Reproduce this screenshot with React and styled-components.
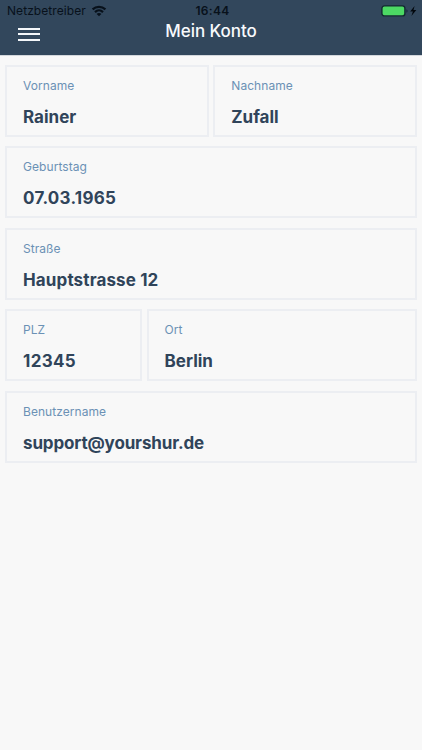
import React from 'react';
import styled, { createGlobalStyle } from 'styled-components';

const GlobalStyle = createGlobalStyle`
  * { box-sizing: border-box; }
  body { margin: 0; background: #f8f8f8; font-family: Inter, "Liberation Sans", sans-serif; }
`;

const Screen = styled.div`
  min-height: 750px;
  background: #f8f8f8;
`;

const Header = styled.header`
  height: 55px;
  background: #32475c;
  box-shadow: 0 1px 0 #d3d7dc;
`;

const StatusBar = styled.div`
  display: grid;
  grid-template-columns: 1fr auto 1fr;
  align-items: center;
  height: 22px;
  padding: 0 5px 0 7px;
  font-size: 12px;
  line-height: 22px;
  color: #08111b;
`;

const Carrier = styled.div`
  display: flex;
  align-items: center;
  gap: 5px;
  letter-spacing: 0.07px;
`;

const Clock = styled.div`
  padding-left: 1px;
  font-weight: 600;
  letter-spacing: 0.3px;
`;

const Power = styled.div`
  display: flex;
  align-items: center;
  justify-content: flex-end;
`;

const NavBar = styled.div`
  display: grid;
  grid-template-columns: 22px 1fr 22px;
  padding: 0 18px;
  height: 33px;
`;

const MenuButton = styled.button`
  display: flex;
  flex-direction: column;
  gap: 3.6px;
  width: 22px;
  height: 14px;
  margin: 6px 0 0;
  padding: 0;
  border: 0;
  background: none;
`;

const MenuLine = styled.span`
  height: 1.9px;
  flex: none;
  background: #f4f7fa;
`;

const Title = styled.h1`
  margin: 0;
  font-size: 17px;
  line-height: 18px;
  font-weight: 500;
  letter-spacing: -0.06px;
  text-align: center;
  color: #f8fafc;
`;

const Fields = styled.dl`
  display: flex;
  flex-direction: column;
  gap: 9.4px;
  margin: 0;
  padding: 10px 5px;
`;

const Row = styled.div`
  display: grid;
  grid-template-columns: ${({ $columns }) => $columns || '1fr'};
  gap: 4.6px;
`;

const Card = styled.div`
  height: 72px;
  padding: 11px 16px 0;
  border: 2px solid #eceef2;
`;

const Label = styled.dt`
  font-size: 12px;
  line-height: 16px;
  letter-spacing: 0.06px;
  color: #6b91b5;
`;

const Value = styled.dd`
  margin: 12px 0 0;
  font-size: 17px;
  line-height: 22px;
  font-weight: 650;
  letter-spacing: ${({ $tracking }) => $tracking ?? 0}px;
  color: #30445a;
`;

const WifiIcon = () => (
  <svg width="16" height="12" viewBox="0 0 16 12" fill="none" stroke="#08111b" strokeWidth="2.2">
    <path d="M1.6 4.4C5.2.9 10.8.9 14.4 4.4" />
    <path d="M4 7.1c2.3-2.2 5.7-2.2 8 0" />
    <path d="M8 11.2 5.6 8.9c1.3-1.2 3.5-1.2 4.8 0Z" fill="#08111b" stroke="none" />
  </svg>
);

const BatteryIcon = () => (
  <svg width="36" height="12" viewBox="0 0 36 12">
    <rect x="0.9" y="0.9" width="23" height="10" rx="2.5" fill="#4cd964" stroke="#132a31" strokeWidth="1.4" />
    <path d="M25.4 4.3c1.6.5 1.6 2.9 0 3.4Z" fill="#16283a" />
    <path d="m33.6 0.9-4.4 5.5h2.7l-1.5 4.7 4.9-6h-2.8Z" fill="#02070c" />
  </svg>
);

const rows = [
  {
    columns: '1fr 1fr',
    fields: [
      { label: 'Vorname', value: 'Rainer', tracking: 0 },
      { label: 'Nachname', value: 'Zufall', tracking: 0 },
    ],
  },
  { fields: [{ label: 'Geburtstag', value: '07.03.1965', tracking: 0.26 }] },
  { fields: [{ label: 'Straße', value: 'Hauptstrasse 12', tracking: 0.13 }] },
  {
    columns: '137px 1fr',
    fields: [
      { label: 'PLZ', value: '12345', tracking: 0.3 },
      { label: 'Ort', value: 'Berlin', tracking: 0 },
    ],
  },
  { fields: [{ label: 'Benutzername', value: 'support@yourshur.de', tracking: -0.14 }] },
];

export default function App() {
  return (
    <>
      <GlobalStyle />
      <Screen>
        <Header>
          <StatusBar>
            <Carrier>Netzbetreiber <WifiIcon /></Carrier>
            <Clock>16:44</Clock>
            <Power><BatteryIcon /></Power>
          </StatusBar>
          <NavBar>
            <MenuButton aria-label="Menü">
              <MenuLine /><MenuLine /><MenuLine />
            </MenuButton>
            <Title>Mein Konto</Title>
          </NavBar>
        </Header>
        <Fields>
          {rows.map((row) => (
            <Row key={row.fields[0].label} $columns={row.columns}>
              {row.fields.map(({ label, value, tracking }) => (
                <Card key={label}>
                  <Label>{label}</Label>
                  <Value $tracking={tracking}>{value}</Value>
                </Card>
              ))}
            </Row>
          ))}
        </Fields>
      </Screen>
    </>
  );
}
